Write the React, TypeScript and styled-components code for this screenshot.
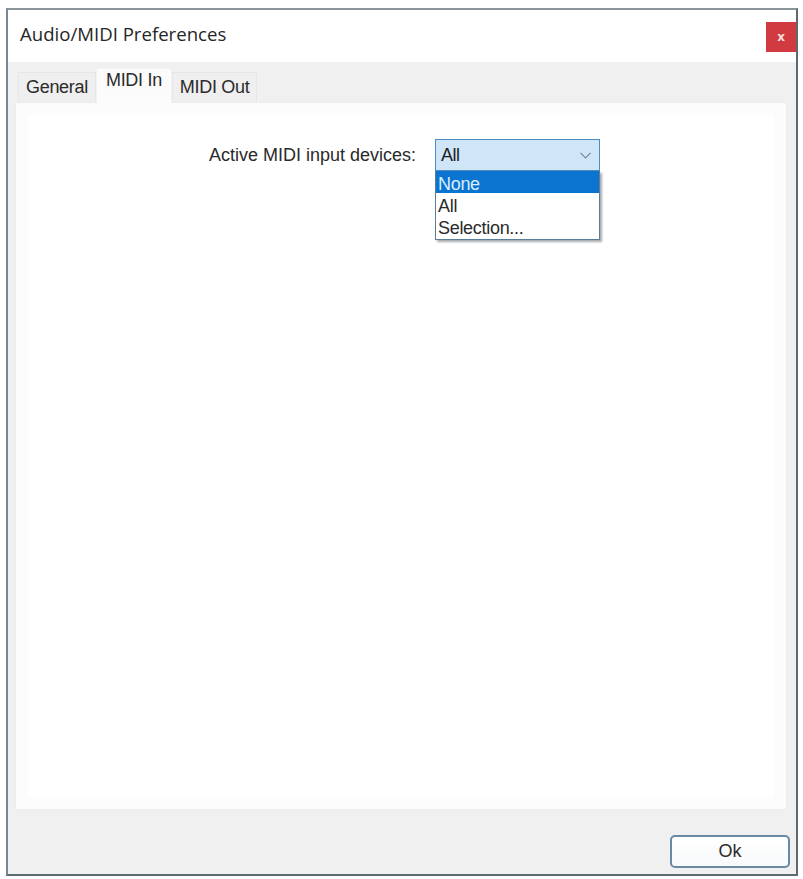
import React from 'react'
import styled, { createGlobalStyle } from 'styled-components'

const GlobalStyle = createGlobalStyle`
  html, body {
    margin: 0;
    padding: 0;
    background: #ffffff;
  }
  body {
    font-family: "Liberation Sans", Arial, sans-serif;
    color: #1a1a1a;
  }
`

const Window = styled.div`
  box-sizing: border-box;
  width: 792px;
  height: 868px;
  margin: 8px 0 0 6px;
  border: 2px solid #5d6a74;
  border-top-color: #8a949b;
  border-left-color: #7c868e;
  display: flex;
  flex-direction: column;
  background: #f0f0f0;
`

const TitleBar = styled.div`
  height: 52px;
  display: flex;
  align-items: flex-start;
  justify-content: space-between;
  background: #ffffff;
`

const Title = styled.div`
  font-family: "Open Sans", "Noto Sans", sans-serif;
  font-size: 18.6px;
  padding: 11px 0 0 12px;
  color: #262626;
`

const CloseButton = styled.div`
  width: 30px;
  height: 30px;
  margin-top: 12px;
  background: #d13a40;
  color: #f5dede;
  display: flex;
  align-items: center;
  justify-content: center;
  font-family: "DejaVu Sans", sans-serif;
  font-size: 12px;
  font-weight: bold;
`

const Body = styled.div`
  flex: 1;
  display: flex;
  flex-direction: column;
  padding: 0 9px 0 7px;
`

const TabStrip = styled.div`
  height: 40px;
  display: flex;
  align-items: flex-end;
  padding-left: 3px;
`

const Tab = styled.div<{ active?: boolean }>`
  box-sizing: border-box;
  height: ${p => (p.active ? '35px' : '30px')};
  padding: ${p => (p.active ? '1px 9px 0' : '4px 7px 0')};
  margin-bottom: ${p => (p.active ? '-1px' : '0')};
  background: ${p => (p.active ? '#fbfbfb' : '#efefef')};
  border: 1px solid ${p => (p.active ? '#f2f2f2' : '#e6e6e6')};
  border-bottom: none;
  font-size: 18px;
  letter-spacing: -0.3px;
  color: #2a2a2a;
  position: relative;
  z-index: ${p => (p.active ? 1 : 0)};
`

const Panel = styled.div`
  box-sizing: border-box;
  height: 708px;
  background: #ffffff;
  border: 1px solid #ececec;
  box-shadow: inset 0 0 0 12px #fcfcfc;
  padding-top: 36px;
`

const FieldRow = styled.div`
  display: flex;
  align-items: center;
  gap: 19px;
`

const FieldLabel = styled.div`
  width: 400px;
  text-align: right;
  font-size: 18px;
  color: #2a2a2a;
`

const ComboWrap = styled.div`
  position: relative;
  width: 165px;
`

const Combo = styled.div`
  box-sizing: border-box;
  height: 32px;
  border: 1px solid #4f8cc2;
  background: #cfe5f8;
  display: flex;
  align-items: center;
  justify-content: space-between;
  padding: 0 8px 0 5px;
  font-size: 18px;
  letter-spacing: -0.5px;
  color: #1e1e1e;
`

const Chevron = styled.svg`
  width: 11px;
  height: 7px;
`

const DropList = styled.div`
  position: absolute;
  top: 32px;
  left: 0;
  width: 165px;
  box-sizing: border-box;
  border: 1px solid #5a7d9a;
  border-top: none;
  background: #ffffff;
  box-shadow: 2px 2px 2px rgba(60, 70, 80, 0.45);
  padding-bottom: 2px;
`

const DropItem = styled.div<{ selected?: boolean }>`
  box-sizing: border-box;
  height: 22px;
  line-height: 22px;
  padding: 2px 0 0 2px;
  font-size: 18px;
  letter-spacing: -0.3px;
  background: ${p => (p.selected ? '#0a74d0' : 'transparent')};
  color: ${p => (p.selected ? '#dbeeff' : '#2a2a2a')};
`

const Footer = styled.div`
  flex: 1;
  display: flex;
  justify-content: flex-end;
  align-items: flex-start;
  padding: 25px 0 0;
  margin-right: -3px;
`

const OkButton = styled.div`
  box-sizing: border-box;
  width: 120px;
  height: 33px;
  border: 2px solid #6a8aa3;
  border-radius: 5px;
  background: linear-gradient(#ffffff, #f7f9fa);
  display: flex;
  align-items: center;
  justify-content: center;
  font-size: 18px;
  color: #2a2a2a;
`

const tabs = ['General', 'MIDI In', 'MIDI Out']
const options = ['None', 'All', 'Selection...']

export default function App() {
  return (
    <>
      <GlobalStyle />
      <Window>
        <TitleBar>
          <Title>Audio/MIDI Preferences</Title>
          <CloseButton>x</CloseButton>
        </TitleBar>
        <Body>
          <TabStrip>
            {tabs.map(t => (
              <Tab key={t} active={t === 'MIDI In'}>{t}</Tab>
            ))}
          </TabStrip>
          <Panel>
            <FieldRow>
              <FieldLabel>Active MIDI input devices:</FieldLabel>
              <ComboWrap>
                <Combo>
                  <span>All</span>
                  <Chevron viewBox="0 0 11 7">
                    <polyline points="0.5,0.8 5.5,5.8 10.5,0.8" fill="none" stroke="#7a8a98" strokeWidth="1.2" />
                  </Chevron>
                </Combo>
                <DropList>
                  {options.map(o => (
                    <DropItem key={o} selected={o === 'None'}>{o}</DropItem>
                  ))}
                </DropList>
              </ComboWrap>
            </FieldRow>
          </Panel>
          <Footer>
            <OkButton>Ok</OkButton>
          </Footer>
        </Body>
      </Window>
    </>
  )
}
